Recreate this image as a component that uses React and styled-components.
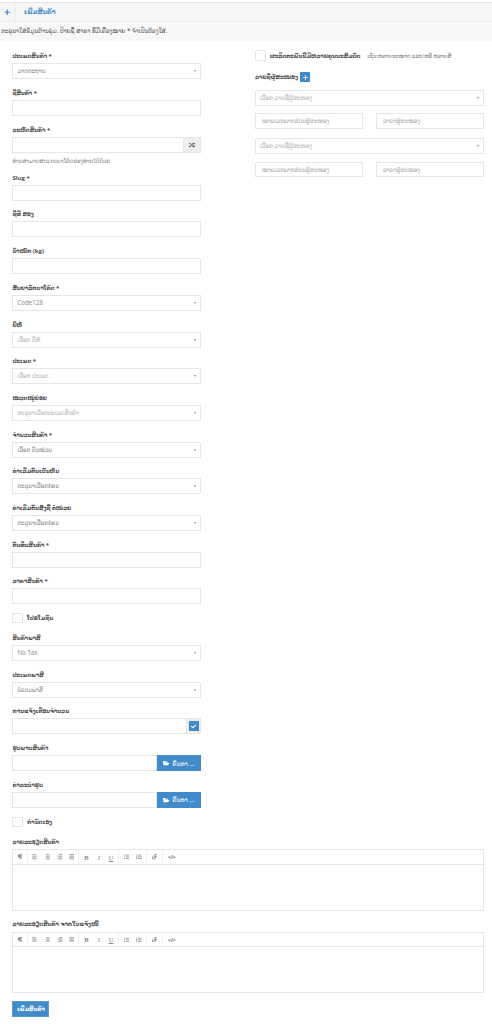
import React from 'react';
import styled, { createGlobalStyle } from 'styled-components';
import { FaPlus, FaRandom, FaCheck, FaFolderOpen, FaParagraph, FaAlignLeft, FaAlignCenter, FaAlignRight, FaAlignJustify, FaListUl, FaListOl, FaLink } from 'react-icons/fa';

const stack = '"Open Sans", "DejaVu Sans Condensed", "DejaVu Sans", sans-serif';
const Global = createGlobalStyle`
  html, body { margin: 0; padding: 0; background: #fff; }
  body { font-family: ${stack}; color: #555; }
  * { box-sizing: border-box; }
`;
const Page = styled.div`width: 492px; height: 1024px; overflow: hidden; padding-top: 2px;`;
const TitleBar = styled.div`
  height: 20px; display: flex; align-items: stretch; background: #f6f6f6;
  border-top: 1px solid #e6e6e6; border-bottom: 1px solid #ececec;
`;
const TitleIcon = styled.div`
  width: 15.5px; display: flex; align-items: center; justify-content: center; color: #428bca; font-size: 6.5px;
  border-right: 1px solid #ececec;
`;
const Title = styled.h2`
  margin: 0 0 0 8.5px; font-size: 6.8px; line-height: 18px; font-weight: 700; color: #428bca;
`;
const InfoBar = styled.div`
  height: 19px; background: #f8f8f8; font-size: 6.4px; line-height: 18px; padding-left: 1px; color: #555;
`;
const Columns = styled.div`
  display: grid; grid-template-columns: 188.4px 228.7px; column-gap: 54.2px; padding: 9.2px 0 0 12.4px;
`;
const Column = styled.div`display: flex; flex-direction: column;`;
const Field = styled.div`margin-bottom: 7.7px;`;
const Label = styled.label`
  display: block; height: 13px; font-size: 6px; line-height: 12px; font-weight: 700; color: #4d4d4d; white-space: nowrap;
`;
const Input = styled.div`
  height: 16px; width: 100%; min-width: 0; background: #fff; border: 1px solid #e6e6e6; font-size: 6.2px; line-height: 14px;
  color: #aaa; padding-left: 4px; white-space: nowrap;
`;
const Select = styled(Input)`
  position: relative; color: ${p => (p.$muted ? '#b5b5b5' : '#888')};
  &::after {
    content: ""; position: absolute; right: 3.5px; top: 6px;
    border-left: 1.6px solid transparent; border-right: 1.6px solid transparent; border-top: 2.2px solid #888;
  }
`;
const Group = styled.div`display: flex;`;
const Addon = styled.div`
  flex: none; width: 16.5px; height: 16px; background: #eee; border: 1px solid #e6e6e6; border-left: 0;
  display: flex; align-items: center; justify-content: center; font-size: 6px; color: #555;
`;
const CheckAddon = styled(Addon)`width: 13.5px; background: #eee; padding: 0;`;
const BlueCheck = styled.span`
  width: 10px; height: 10px; background: #428bca; color: #fff; display: flex; align-items: center; justify-content: center; font-size: 5px;
`;
const Browse = styled.div`
  flex: none; width: 44px; height: 16px; background: #428bca; color: #fff; font-size: 6.2px; display: flex; gap: 3px;
  align-items: center; justify-content: center; white-space: nowrap;
`;
const Hint = styled.div`
  height: 11.5px; margin-top: 3px; margin-bottom: -3px; font-size: 6px; line-height: 11px; color: #888; white-space: nowrap;
`;
const CheckRow = styled.div`
  display: flex; align-items: center; gap: 4px; height: 11px; margin: ${p => p.$m || '0.5px 0 8.5px'};
  font-size: 6px; font-weight: 700; color: #4d4d4d; white-space: nowrap;
`;
const Box = styled.span`
  width: 10.7px; height: 10.7px; border: 1px solid #e6e6e6; background: #fff; flex: none;
`;
const Aside = styled.span`font-weight: 400; color: #777; font-size: 5.8px; margin-left: 3px;`;
const SupplierLabel = styled.div`
  display: flex; align-items: center; gap: 2px; height: 11px; margin: 10.5px 0 7.5px;
  font-size: 6px; font-weight: 700; color: #4d4d4d;
`;
const AddBtn = styled.span`
  width: 10.3px; height: 10px; background: #428bca; color: #fff; font-size: 5px; display: flex; align-items: center; justify-content: center;
`;
const SupplierRow = styled.div`display: grid; grid-template-columns: 108px 107.7px; column-gap: 13px; margin: 7.3px 0 9.5px;`;
const PlainInput = styled(Input)`color: #aaa; padding-left: 6px; height: 15.5px;`;
const Wide = styled.div`padding: 0 8.3px 0 12.4px; margin-top: ${p => p.$mt || 0}px;`;
const EditorLabel = styled(Label)`height: 13.4px;`;
const Editor = styled.div`border: 1px solid #e6e6e6; height: 61.6px; background: #fff; margin-bottom: 7.4px;`;
const Toolbar = styled.div`
  height: 14.5px; border-bottom: 1px solid #e6e6e6; display: flex; align-items: stretch; color: #888;
`;
const ToolGroup = styled.div`
  display: flex; align-items: center; padding: 0 1px; font-size: 5.2px; border-right: 1px solid #f0f0f0;
`;
const Tool = styled.span`
  width: ${p => p.$w || 12.4}px; display: flex; justify-content: center; align-items: center;
  font-family: "Liberation Serif", serif; font-size: ${p => (p.$letter ? 6.5 : 5.6)}px; font-weight: ${p => p.$bold ? 700 : 400};
  font-style: ${p => p.$i ? 'italic' : 'normal'}; text-decoration: ${p => p.$u ? 'underline' : 'none'};
`;
const CodeTag = styled.span`font-family: "Open Sans", sans-serif; font-size: 5.2px; line-height: 14px; font-weight: 700; color: #666; padding-left: 5px;`;
const Submit = styled.button`
  display: block; width: 37px; height: 16.5px; background: #428bca; border: 1px solid #5b9bd3; color: #fff; font: 700 6px ${stack}; padding: 0;
`;

const F = ({ label, children }) => (<Field><Label>{label}</Label>{children}</Field>);

const EditorTools = () => (
  <Toolbar>
    <ToolGroup><Tool $w={11.6}><FaParagraph /></Tool></ToolGroup>
    <ToolGroup>
      <Tool><FaAlignLeft /></Tool><Tool><FaAlignCenter /></Tool><Tool><FaAlignRight /></Tool><Tool $w={11}><FaAlignJustify /></Tool>
    </ToolGroup>
    <ToolGroup>
      <Tool $letter $bold>B</Tool><Tool $letter $i>I</Tool><Tool $letter $u>U</Tool>
    </ToolGroup>
    <ToolGroup><Tool $w={12.5}><FaListUl /></Tool><Tool $w={12.5}><FaListOl /></Tool></ToolGroup>
    <ToolGroup><Tool><FaLink /></Tool></ToolGroup>
    <CodeTag>&lt;/&gt;</CodeTag>
  </Toolbar>
);

const Supplier = () => (
  <>
    <Select $muted>ເລືອກ ລາຍຊື່ຜູ້ສະໜອງ</Select>
    <SupplierRow>
      <PlainInput>ໝາຍເລກພາກສ່ວນຜູ້ສະໜອງ</PlainInput>
      <PlainInput>ລາຄາຜູ້ສະໜອງ</PlainInput>
    </SupplierRow>
  </>
);

export default function App() {
  return (
    <Page>
      <Global />
      <TitleBar>
        <TitleIcon><FaPlus /></TitleIcon>
        <Title>ເພີ່ມສິນຄ້າ</Title>
      </TitleBar>
      <InfoBar>ກະລຸນາໃສ່ຂໍ້ມູນດ້ານລຸ່ມ. ປ້າຍຊື່ ສາຂາ ທີ່ມີເຄື່ອງໝາຍ * ຈຳເປັນຕ້ອງໃສ່.</InfoBar>
      <Columns>
        <Column>
          <F label="ປະເພດສິນຄ້າ *"><Select>ມາດຕະຖານ</Select></F>
          <F label="ຊື່ສິນຄ້າ *"><Input /></F>
          <F label="ລະຫັດສິນຄ້າ *">
            <Group><Input /><Addon><FaRandom /></Addon></Group>
            <Hint>ທ່ານສາມາດສະແກນບາໂຄ້ດຂອງທ່ານໄດ້ດ້ວຍ</Hint>
          </F>
          <F label="Slug *"><Input /></F>
          <F label="ຊື່ທີ່ ສອງ"><Input /></F>
          <F label="ນ້ຳໜັກ (kg)"><Input /></F>
          <F label="ສັນຍາລັກບາໂຄ້ດ *"><Select>Code128</Select></F>
          <F label="ຍີ່ຫໍ້"><Select $muted>ເລືອກ ຍີ່ຫໍ້</Select></F>
          <F label="ປະເພດ *"><Select $muted>ເລືອກ ປະເພດ</Select></F>
          <F label="ໝວດໝູ່ຍ່ອຍ"><Select $muted>ກະລຸນາເລືອກປະເພດສິນຄ້າ</Select></F>
          <F label="ຈຳນວນສິນຄ້າ *"><Select>ເລືອກ ຕົວໜ່ວຍ</Select></F>
          <F label="ຄ່າເລີ່ມຕົ້ນເປັນຫົນ"><Select>ກະລຸນາເລືອກກ່ອນ</Select></F>
          <F label="ຄ່າເລີ່ມຕົ້ນສັ່ງຊື້ ຕໍ່ໜ່ວຍ"><Select>ກະລຸນາເລືອກກ່ອນ</Select></F>
          <F label="ຕົ້ນທຶນສິນຄ້າ *"><Input /></F>
          <F label="ລາຄາສິນຄ້າ *"><Input /></F>
          <CheckRow><Box />ໂປຣໂມຊັນ</CheckRow>
          <F label="ສິນຄ້າພາສີ"><Select>No Tax</Select></F>
          <F label="ປະເພດພາສີ"><Select>ບໍ່ລວມພາສີ</Select></F>
          <F label="ການແຈ້ງເຕືອນຈຳນວນ">
            <Group><Input /><CheckAddon><BlueCheck><FaCheck /></BlueCheck></CheckAddon></Group>
          </F>
          <F label="ຮູບພາບສິນຄ້າ">
            <Group><Input /><Browse><FaFolderOpen />ຄົ້ນຫາ ...</Browse></Group>
          </F>
          <F label="ຄ່າລະນຳຮູບ">
            <Group><Input /><Browse><FaFolderOpen />ຄົ້ນຫາ ...</Browse></Group>
          </F>
        </Column>
        <Column>
          <CheckRow $m="0">
            <Box />ຜະລິດຕະພັນນີ້ມີຫລາຍຄຸນນະສົມບັດ<Aside>ເຊັ່ນ:ຫລາຍຂະໜາດ ແລະ/ຫລື ຫລາຍສີ</Aside>
          </CheckRow>
          <SupplierLabel>ລາຍຊື່ຜູ້ສະໜອງ<AddBtn><FaPlus /></AddBtn></SupplierLabel>
          <Supplier />
          <Supplier />
        </Column>
      </Columns>
      <Wide $mt={1}>
        <CheckRow $m="0 0 8.6px"><Box />ກຳນົດເອງ</CheckRow>
        <EditorLabel>ລາຍລະອຽດສິນຄ້າ</EditorLabel>
        <Editor><EditorTools /></Editor>
        <EditorLabel>ລາຍລະອຽດສິນຄ້າ ຈາກໃບແຈ້ງໜີ້</EditorLabel>
        <Editor><EditorTools /></Editor>
        <Submit>ເພີ່ມສິນຄ້າ</Submit>
      </Wide>
    </Page>
  );
}
